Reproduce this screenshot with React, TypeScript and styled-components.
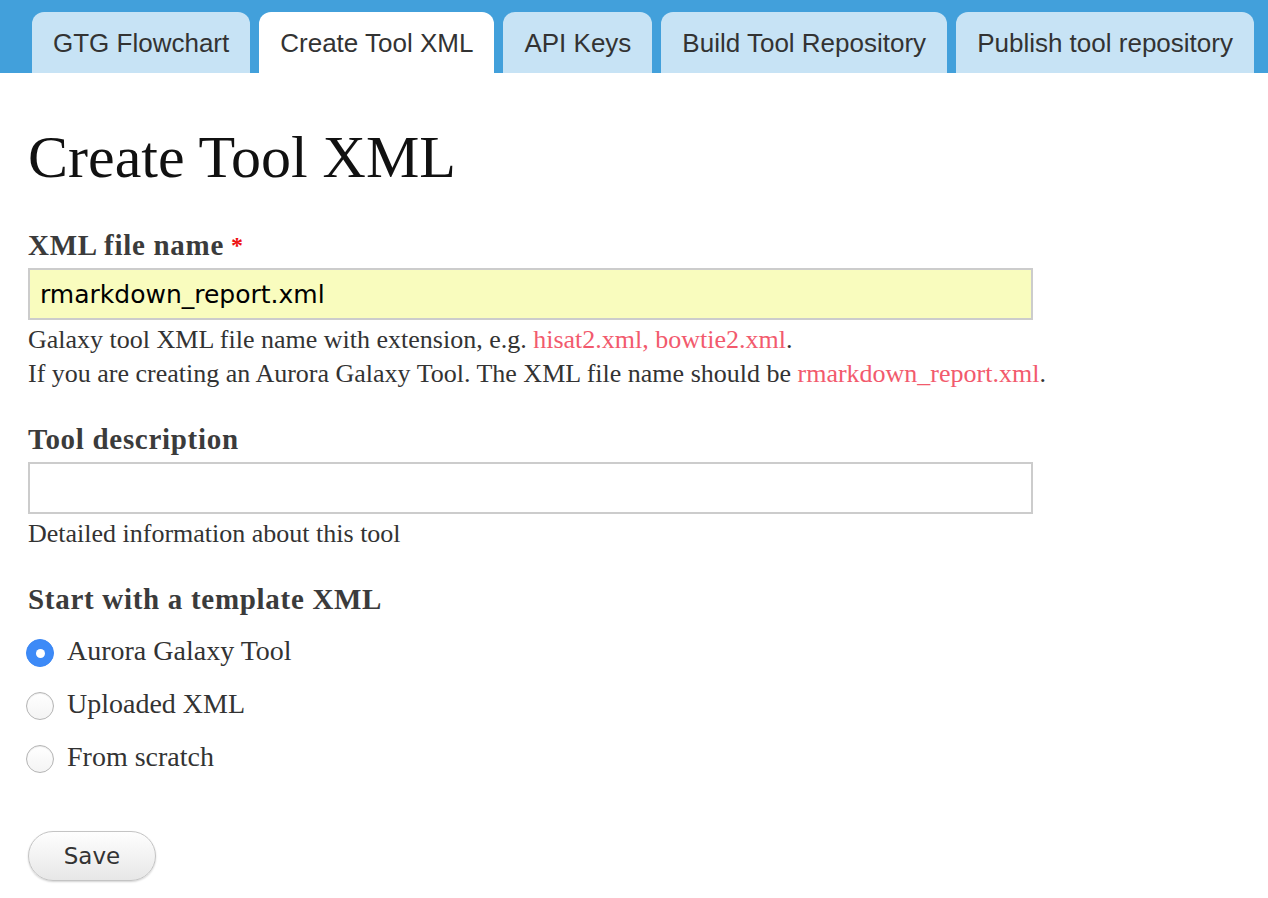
import styled, { createGlobalStyle } from 'styled-components';

const GlobalStyle = createGlobalStyle`
    html, body {
        margin: 0;
        padding: 0;
        background: #ffffff;
    }
    body {
        font-family: "Liberation Serif", serif;
        color: #333333;
    }
`;

const tabs = [
    { name: 'GTG Flowchart', active: false },
    { name: 'Create Tool XML', active: true },
    { name: 'API Keys', active: false },
    { name: 'Build Tool Repository', active: false },
    { name: 'Publish tool repository', active: false },
];

const radios = [
    { name: 'Aurora Galaxy Tool', checked: true },
    { name: 'Uploaded XML', checked: false },
    { name: 'From scratch', checked: false },
];

const TabBar = styled.nav`
    display: flex;
    align-items: flex-end;
    gap: 9px;
    height: 73px;
    box-sizing: border-box;
    padding: 12px 0 0 32px;
    background: #42a0db;
`;

const Tab = styled.a<{ $active?: boolean }>`
    display: flex;
    align-items: center;
    height: 61px;
    padding: 2px 21px 0;
    box-sizing: border-box;
    border-radius: 12px 12px 0 0;
    background: ${({ $active }) => ($active ? '#ffffff' : '#c7e3f5')};
    font-family: "Liberation Sans", Arial, sans-serif;
    font-size: 26px;
    color: #333333;
    text-decoration: none;
    white-space: nowrap;
`;

const Main = styled.main`
    padding: 0 28px 40px;
`;

const Title = styled.h1`
    margin: 49px 0 36px;
    font-size: 60px;
    line-height: 70px;
    font-weight: normal;
    color: #111111;
`;

const Field = styled.div`
    margin-bottom: 31px;
`;

const Label = styled.label`
    display: block;
    margin-bottom: 6px;
    font-size: 29px;
    line-height: 34px;
    font-weight: bold;
    letter-spacing: 0.7px;
    color: #3b3b3b;
`;

const Required = styled.span`
    color: #ee1111;
    font-size: 24px;
    vertical-align: 2px;
    margin-left: 7px;
`;

const TextInput = styled.input<{ $filled?: boolean }>`
    display: block;
    width: 1005px;
    height: 52px;
    box-sizing: border-box;
    margin: 0;
    padding: 0 10px;
    border: 2px solid #cccccc;
    border-radius: 0;
    background: ${({ $filled }) => ($filled ? '#f9fcbe' : '#ffffff')};
    font-family: "DejaVu Sans", Verdana, sans-serif;
    font-size: 25px;
    color: #000000;
    outline: none;
`;

const Description = styled.div`
    margin-top: 3px;
    font-size: 26px;
    line-height: 34px;
    color: #333333;
`;

const Link = styled.a`
    color: #f25a6d;
    text-decoration: none;
`;

const RadioList = styled.div`
    margin-top: 8px;
    display: flex;
    flex-direction: column;
`;

const RadioRow = styled.label`
    display: flex;
    align-items: center;
    gap: 13px;
    height: 53px;
    font-size: 28px;
    color: #333333;
`;

const RadioMark = styled.span<{ $checked?: boolean }>`
    position: relative;
    flex: none;
    width: 28px;
    height: 28px;
    margin-left: -2px;
    margin-top: 5px;
    box-sizing: border-box;
    border-radius: 50%;
    border: 1px solid ${({ $checked }) => ($checked ? '#3b87f5' : '#b5b5b5')};
    background: ${({ $checked }) =>
        $checked ? '#3d8af7' : 'linear-gradient(#ffffff, #f4f4f4)'};
    box-shadow: ${({ $checked }) =>
        $checked ? 'none' : 'inset 0 1px 1px rgba(0,0,0,0.08)'};

    &::after {
        content: '';
        display: ${({ $checked }) => ($checked ? 'block' : 'none')};
        position: absolute;
        left: 50%;
        top: 50%;
        width: 9px;
        height: 9px;
        margin: -4.5px 0 0 -4.5px;
        border-radius: 50%;
        background: #ffffff;
    }
`;

const Actions = styled.div`
    margin-top: 48px;
`;

const SaveButton = styled.button`
    width: 128px;
    height: 50px;
    border: 1px solid #c4c4c4;
    border-radius: 25px;
    background: linear-gradient(#fefefe, #e7e7e7);
    box-shadow: 0 1px 2px rgba(0, 0, 0, 0.18);
    font-family: "DejaVu Sans", Verdana, sans-serif;
    font-size: 23px;
    color: #333333;
    padding: 0;
    cursor: pointer;
`;

function App() {
    return (
        <>
            <GlobalStyle />
            <TabBar>
                {tabs.map((tab) => (
                    <Tab key={tab.name} href="#" $active={tab.active}>
                        {tab.name}
                    </Tab>
                ))}
            </TabBar>
            <Main>
                <Title>Create Tool XML</Title>

                <Field>
                    <Label>
                        XML file name<Required>*</Required>
                    </Label>
                    <TextInput $filled defaultValue="rmarkdown_report.xml" />
                    <Description>
                        Galaxy tool XML file name with extension, e.g.{' '}
                        <Link href="#">hisat2.xml, bowtie2.xml</Link>.
                        <br />
                        If you are creating an Aurora Galaxy Tool. The XML file name should be{' '}
                        <Link href="#">rmarkdown_report.xml</Link>.
                    </Description>
                </Field>

                <Field>
                    <Label>Tool description</Label>
                    <TextInput />
                    <Description>Detailed information about this tool</Description>
                </Field>

                <Field>
                    <Label>Start with a template XML</Label>
                    <RadioList>
                        {radios.map((radio) => (
                            <RadioRow key={radio.name}>
                                <RadioMark $checked={radio.checked} />
                                {radio.name}
                            </RadioRow>
                        ))}
                    </RadioList>
                </Field>

                <Actions>
                    <SaveButton>Save</SaveButton>
                </Actions>
            </Main>
        </>
    );
}

export default App;
